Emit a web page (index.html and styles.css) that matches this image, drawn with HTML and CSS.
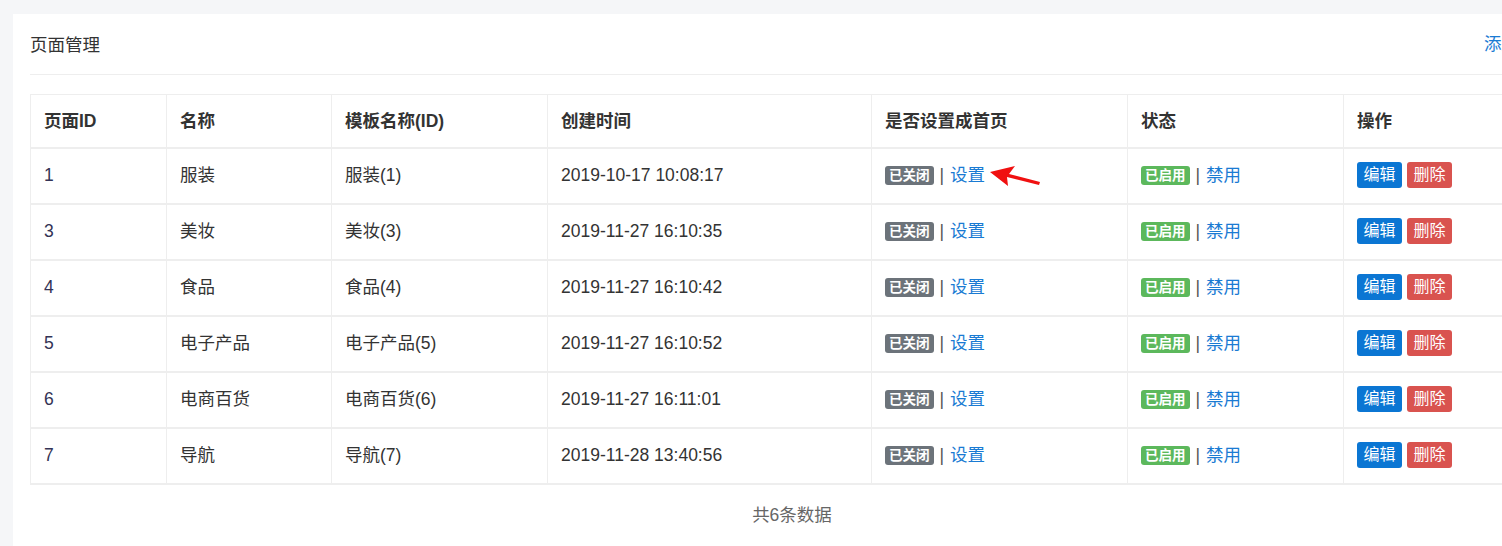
FILE: index.html
```html
<!DOCTYPE html>
<html lang="zh-CN">
<head>
<meta charset="utf-8">
<title>页面管理</title>
<link rel="stylesheet" href="styles.css">
</head>
<body>
<div class="card">
  <div class="card-head">
    <span class="card-title">页面管理</span>
    <a class="add-link" href="#">添加页面</a>
  </div>
  <table class="grid">
    <colgroup>
      <col class="c1"><col class="c2"><col class="c3"><col class="c4"><col class="c5"><col class="c6"><col class="c7">
    </colgroup>
    <thead>
      <tr><th>页面ID</th><th>名称</th><th>模板名称(ID)</th><th>创建时间</th><th>是否设置成首页</th><th>状态</th><th>操作</th></tr>
    </thead>
    <tbody>
      <tr><td>1</td><td>服装</td><td>服装(1)</td><td>2019-10-17 10:08:17</td>
        <td class="home-cell"><span class="badge badge-off">已关闭</span><span class="sep">|</span><a class="lnk" href="#">设置</a>
          <svg class="arrow" width="60" height="30" viewBox="0 0 60 30"><polygon points="2,11 27,5 21,13 52,21 51,24 19,16 20,25" fill="#f01010"/></svg>
        </td>
        <td><span class="badge badge-on">已启用</span><span class="sep">|</span><a class="lnk" href="#">禁用</a></td>
        <td><span class="btn btn-blue">编辑</span><span class="btn btn-red">删除</span></td></tr>
      <tr><td>3</td><td>美妆</td><td>美妆(3)</td><td>2019-11-27 16:10:35</td>
        <td><span class="badge badge-off">已关闭</span><span class="sep">|</span><a class="lnk" href="#">设置</a></td>
        <td><span class="badge badge-on">已启用</span><span class="sep">|</span><a class="lnk" href="#">禁用</a></td>
        <td><span class="btn btn-blue">编辑</span><span class="btn btn-red">删除</span></td></tr>
      <tr><td>4</td><td>食品</td><td>食品(4)</td><td>2019-11-27 16:10:42</td>
        <td><span class="badge badge-off">已关闭</span><span class="sep">|</span><a class="lnk" href="#">设置</a></td>
        <td><span class="badge badge-on">已启用</span><span class="sep">|</span><a class="lnk" href="#">禁用</a></td>
        <td><span class="btn btn-blue">编辑</span><span class="btn btn-red">删除</span></td></tr>
      <tr><td>5</td><td>电子产品</td><td>电子产品(5)</td><td>2019-11-27 16:10:52</td>
        <td><span class="badge badge-off">已关闭</span><span class="sep">|</span><a class="lnk" href="#">设置</a></td>
        <td><span class="badge badge-on">已启用</span><span class="sep">|</span><a class="lnk" href="#">禁用</a></td>
        <td><span class="btn btn-blue">编辑</span><span class="btn btn-red">删除</span></td></tr>
      <tr><td>6</td><td>电商百货</td><td>电商百货(6)</td><td>2019-11-27 16:11:01</td>
        <td><span class="badge badge-off">已关闭</span><span class="sep">|</span><a class="lnk" href="#">设置</a></td>
        <td><span class="badge badge-on">已启用</span><span class="sep">|</span><a class="lnk" href="#">禁用</a></td>
        <td><span class="btn btn-blue">编辑</span><span class="btn btn-red">删除</span></td></tr>
      <tr><td>7</td><td>导航</td><td>导航(7)</td><td>2019-11-28 13:40:56</td>
        <td><span class="badge badge-off">已关闭</span><span class="sep">|</span><a class="lnk" href="#">设置</a></td>
        <td><span class="badge badge-on">已启用</span><span class="sep">|</span><a class="lnk" href="#">禁用</a></td>
        <td><span class="btn btn-blue">编辑</span><span class="btn btn-red">删除</span></td></tr>
    </tbody>
  </table>
  <div class="foot">共6条数据</div>
</div>
</body>
</html>
```
FILE: styles.css
```css
html, body {
  margin: 0;
  padding: 0;
  overflow: hidden;
}
body {
  background: #f5f6f8;
  font-family: "Liberation Sans", "Noto Sans CJK SC", sans-serif;
  font-size: 17.5px;
  color: #333;
  width: 1600px;
}
.card {
  margin: 14px 0 0 13px;
  width: 1558px;
  height: 600px;
  background: #fff;
  padding: 0 17px;
  box-sizing: border-box;
}
.card-head {
  height: 60px;
  border-bottom: 1px solid #eee;
  display: flex;
  align-items: center;
  justify-content: space-between;
}
.card-title {
  color: #333;
  line-height: 24px;
  padding-top: 1px;
}
.add-link {
  color: #1a7bd3;
  text-decoration: none;
  line-height: 24px;
}
.grid {
  margin-top: 19px;
  width: 1524px;
  border-collapse: collapse;
  table-layout: fixed;
}
.c1 { width: 136px; }
.c2 { width: 165px; }
.c3 { width: 216px; }
.c4 { width: 324px; }
.c5 { width: 256px; }
.c6 { width: 216px; }
.c7 { width: 211px; }
.grid th, .grid td {
  border-left: 1px solid #eee;
  border-right: 1px solid #eee;
  border-bottom: 2px solid #eee;
  text-align: left;
  vertical-align: middle;
  padding: 0 13px;
  line-height: 24px;
  white-space: nowrap;
}
.grid th {
  border-top: 1px solid #eee;
  height: 52px;
  font-weight: bold;
  color: #333;
}
.grid td {
  height: 52px;
  padding-bottom: 2px;
}
.grid tbody td:first-child {
  color: #335;
}
.home-cell {
  position: relative;
}
.badge {
  display: inline-block;
  vertical-align: middle;
  color: #fff;
  font-size: 13.5px;
  font-weight: bold;
  line-height: 19px;
  height: 19px;
  padding: 0 4px;
  border-radius: 3px;
  position: relative;
  top: -1px;
}
.badge-off { background: #6c737a; }
.badge-on { background: #5cb85c; }
.sep {
  color: #555;
  margin: 0 6px 0 6px;
}
.lnk {
  color: #1a7bd3;
  text-decoration: none;
}
.btn {
  display: inline-block;
  vertical-align: middle;
  color: #fff;
  font-size: 16px;
  line-height: 26px;
  height: 26px;
  padding: 0 6.5px;
  border-radius: 3px;
  margin-right: 5px;
}
.btn-blue { background: #0b76d3; }
.btn-red { background: #d9534f; }
.arrow {
  position: absolute;
  left: 116px;
  top: 12px;
}
.foot {
  text-align: center;
  color: #666;
  line-height: 22px;
  padding-top: 19px;
}
```
